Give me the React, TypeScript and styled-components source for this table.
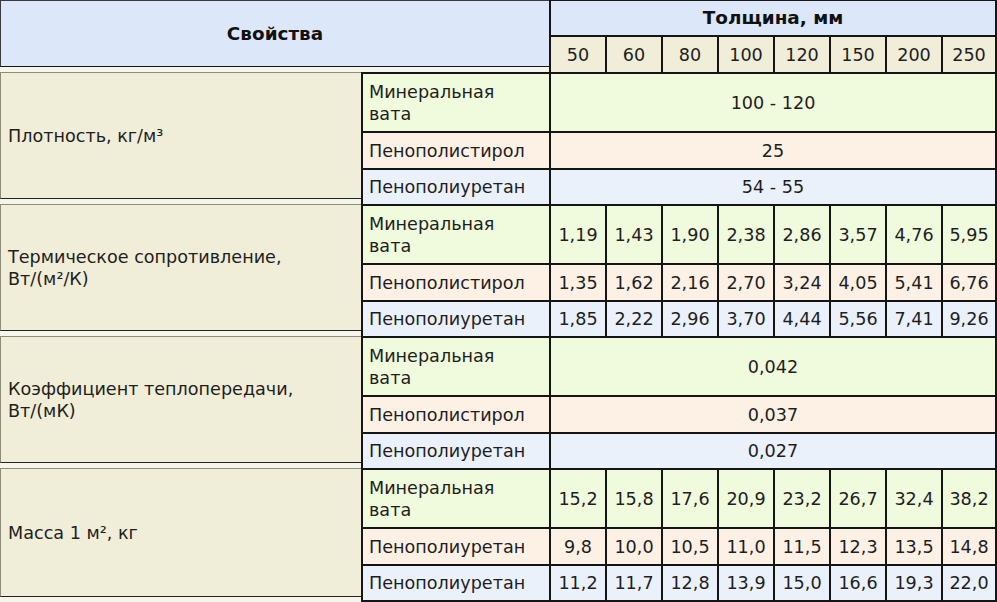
import React from "react";
import styled, { createGlobalStyle } from "styled-components";

type Tone = "green" | "peach" | "blue";

type Row = {
  name: string;
  tone: Tone;
  merged?: string;
  values?: string[];
};

type Group = {
  title: string;
  rows: Row[];
};

const thickness = ["50", "60", "80", "100", "120", "150", "200", "250"];

const groups: Group[] = [
  {
    title: "Плотность, кг/м³",
    rows: [
      { name: "Минеральная\nвата", tone: "green", merged: "100 - 120" },
      { name: "Пенополистирол", tone: "peach", merged: "25" },
      { name: "Пенополиуретан", tone: "blue", merged: "54 - 55" },
    ],
  },
  {
    title: "Термическое сопротивление,\nВт/(м²/К)",
    rows: [
      {
        name: "Минеральная\nвата",
        tone: "green",
        values: ["1,19", "1,43", "1,90", "2,38", "2,86", "3,57", "4,76", "5,95"],
      },
      {
        name: "Пенополистирол",
        tone: "peach",
        values: ["1,35", "1,62", "2,16", "2,70", "3,24", "4,05", "5,41", "6,76"],
      },
      {
        name: "Пенополиуретан",
        tone: "blue",
        values: ["1,85", "2,22", "2,96", "3,70", "4,44", "5,56", "7,41", "9,26"],
      },
    ],
  },
  {
    title: "Коэффициент теплопередачи,\nВт/(мК)",
    rows: [
      { name: "Минеральная\nвата", tone: "green", merged: "0,042" },
      { name: "Пенополистирол", tone: "peach", merged: "0,037" },
      { name: "Пенополиуретан", tone: "blue", merged: "0,027" },
    ],
  },
  {
    title: "Масса 1 м², кг",
    rows: [
      {
        name: "Минеральная\nвата",
        tone: "green",
        values: ["15,2", "15,8", "17,6", "20,9", "23,2", "26,7", "32,4", "38,2"],
      },
      {
        name: "Пенополиуретан",
        tone: "peach",
        values: ["9,8", "10,0", "10,5", "11,0", "11,5", "12,3", "13,5", "14,8"],
      },
      {
        name: "Пенополиуретан",
        tone: "blue",
        values: ["11,2", "11,7", "12,8", "13,9", "15,0", "16,6", "19,3", "22,0"],
      },
    ],
  },
];

const tones: Record<Tone, string> = {
  green: "#f0fadd",
  peach: "#fdf1e6",
  blue: "#ebf1fb",
};

const App = () => {
  return (
    <>
      <GlobalStyle />
      <Table>
        <PropsHead>Свойства</PropsHead>
        <ThickHead>Толщина, мм</ThickHead>
        {thickness.map((t) => (
          <ThickCell key={t}>{t}</ThickCell>
        ))}
        {groups.map((g, gi) => (
          <React.Fragment key={gi}>
            <PropCell>{g.title}</PropCell>
            {g.rows.map((r, ri) => {
              const last = gi === groups.length - 1 && ri === g.rows.length - 1;
              return (
                <React.Fragment key={ri}>
                  <NameCell $tone={r.tone} $last={last}>
                    {r.name}
                  </NameCell>
                  {r.merged ? (
                    <ValueCell $tone={r.tone} $span={8} $last={last}>
                      {r.merged}
                    </ValueCell>
                  ) : (
                    r.values?.map((v, vi) => (
                      <ValueCell key={vi} $tone={r.tone} $span={1} $last={last}>
                        {v}
                      </ValueCell>
                    ))
                  )}
                </React.Fragment>
              );
            })}
          </React.Fragment>
        ))}
      </Table>
    </>
  );
};

export default App;

const GlobalStyle = createGlobalStyle`
  html, body {
    margin: 0;
    padding: 0;
    background: #ffffff;
  }
  body {
    font-family: "DejaVu Sans", Verdana, sans-serif;
  }
`;

const Table = styled.div`
  display: grid;
  width: 995px;
  grid-template-columns: 361px 188px repeat(7, 56px) 54px;
  grid-template-rows: 35px 37px repeat(3, 59px 37px 36px) 59px 37px 38px;
  border-right: 2px solid #151515;
  background: #f6f5ec;
  font-size: 17.6px;
  line-height: 22px;
  color: #1e1e1e;
`;

const PropsHead = styled.div`
  grid-column: 1 / 3;
  grid-row: 1 / 3;
  margin-bottom: 5px;
  display: flex;
  align-items: center;
  justify-content: center;
  background: #dce8fa;
  border-top: 1px solid #3a3a3a;
  border-left: 1px solid #3a3a3a;
  border-bottom: 1px solid #151515;
  font-size: 18.4px;
  font-weight: bold;
  color: #111;
`;

const ThickHead = styled.div`
  grid-column: 3 / span 8;
  display: flex;
  align-items: center;
  justify-content: center;
  background: #dce8fa;
  border-top: 1px solid #151515;
  border-left: 2px solid #151515;
  font-size: 18.4px;
  font-weight: bold;
  color: #111;
`;

const ThickCell = styled.div`
  display: flex;
  align-items: center;
  justify-content: center;
  background: #f0edd8;
  border-top: 2px solid #151515;
  border-left: 2px solid #151515;
`;

const PropCell = styled.div`
  grid-column: 1;
  grid-row: span 3;
  margin-bottom: 5px;
  display: flex;
  align-items: center;
  padding-left: 7px;
  white-space: pre-line;
  background: #f0edd8;
  border-top: 1px solid #8d8b7a;
  border-left: 1px solid #8d8b7a;
  border-bottom: 1px solid #222;
`;

const NameCell = styled.div<{ $tone: Tone; $last: boolean }>`
  grid-column: 2;
  display: flex;
  align-items: center;
  padding-left: 6px;
  white-space: pre-line;
  background: ${(p) => tones[p.$tone]};
  border-top: 2px solid #151515;
  border-left: 2px solid #151515;
  border-bottom: ${(p) => (p.$last ? "2px solid #151515" : "none")};
`;

const ValueCell = styled.div<{ $tone: Tone; $span: number; $last: boolean }>`
  grid-column: span ${(p) => p.$span};
  display: flex;
  align-items: center;
  justify-content: center;
  background: ${(p) => tones[p.$tone]};
  border-top: 2px solid #151515;
  border-left: 2px solid #151515;
  border-bottom: ${(p) => (p.$last ? "2px solid #151515" : "none")};
`;
